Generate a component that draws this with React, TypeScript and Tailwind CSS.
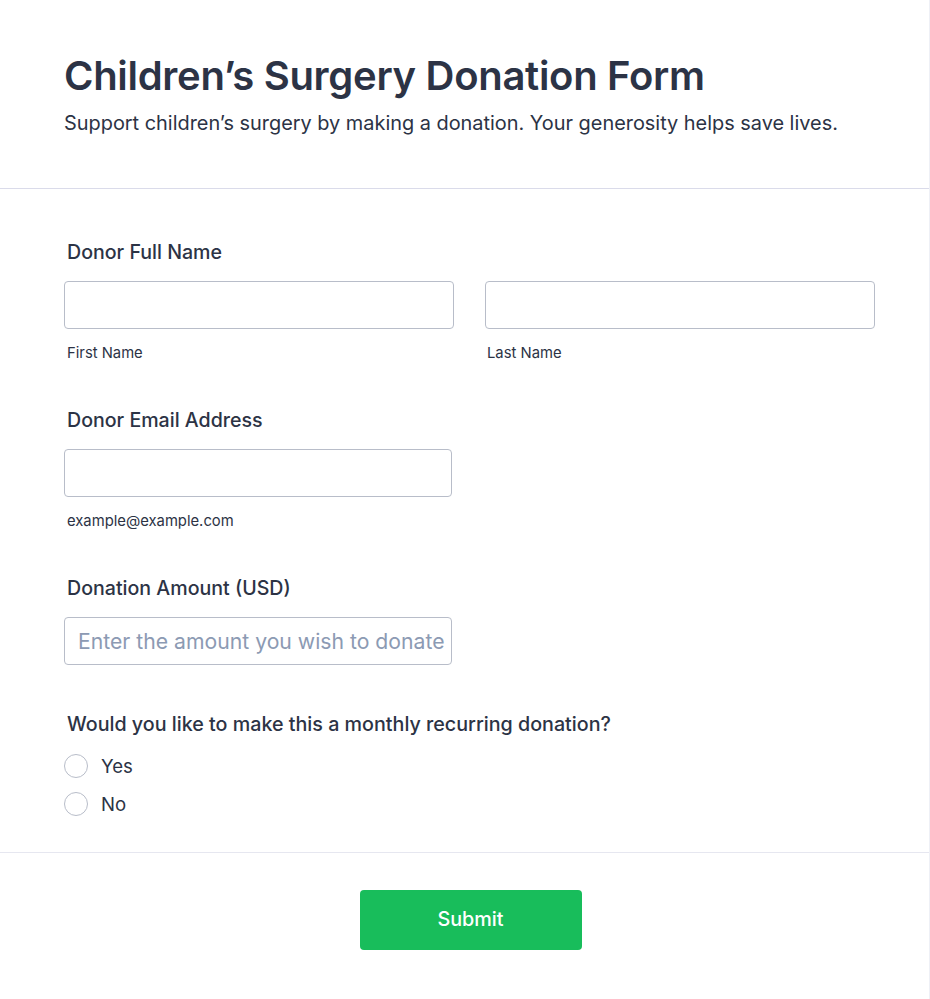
export default function App() {
  return (
    <div className="min-h-[999px] w-[930px] border-r border-[#eef0f6] bg-white font-['Inter',sans-serif] text-[#2c3345]">
      <div className="px-16 pt-[52px] pb-[51px] border-b border-[#dadbea]">
        <h1 className="text-[40px] font-semibold leading-[48px] tracking-[-0.3px]">Children’s Surgery Donation Form</h1>
        <p className="mt-[9px] text-[19.9px] leading-[28px]">
          Support children’s surgery by making a donation. Your generosity helps save lives.
        </p>
      </div>

      <div className="pl-16 pr-[40px] pt-[50px] pb-[36px] border-b border-[#e6e7f0]">
        <div>
          <label className="block pl-[3px] text-[19.6px] font-medium leading-[26px]">Donor Full Name</label>
          <div className="mt-[16px] flex gap-[31px]">
            <div className="w-[390px] shrink-0">
              <input className="block h-[48px] w-full rounded-[4px] border border-[#b8bdc9] px-3" />
              <span className="mt-[14px] block pl-[3px] text-[14.8px] leading-[20px]">First Name</span>
            </div>
            <div className="w-[390px] shrink-0">
              <input className="block h-[48px] w-full rounded-[4px] border border-[#b8bdc9] px-3" />
              <span className="mt-[14px] block pl-[2px] text-[14.8px] leading-[20px]">Last Name</span>
            </div>
          </div>
        </div>

        <div className="mt-[44px]">
          <label className="block pl-[3px] text-[19.6px] font-medium leading-[26px]">Donor Email Address</label>
          <div className="mt-[16px] w-[388px]">
            <input className="block h-[48px] w-full rounded-[4px] border border-[#b8bdc9] px-3" />
            <span className="mt-[14px] block pl-[3px] text-[14.8px] leading-[20px]">example@example.com</span>
          </div>
        </div>

        <div className="mt-[44px]">
          <label className="block pl-[3px] text-[19.6px] font-medium leading-[26px]">Donation Amount (USD)</label>
          <input
            className="mt-[16px] block h-[48px] w-[388px] rounded-[4px] border border-[#b8bdc9] pl-[13px] pr-[1px] text-[21.2px] placeholder:text-[#8c9ab3]"
            placeholder="Enter the amount you wish to donate"
          />
        </div>

        <div className="mt-[46px]">
          <label className="block pl-[3px] text-[19.7px] font-medium leading-[26px]">
            Would you like to make this a monthly recurring donation?
          </label>
          <div className="mt-[17px] flex flex-col gap-[14px]">
            {['Yes', 'No'].map((opt) => (
              <label key={opt} className="flex items-center gap-[13px]">
                <span className="h-[24px] w-[24px] rounded-full border border-[#b8bdc9] bg-white" />
                <span className="text-[18.6px] leading-[24px]">{opt}</span>
              </label>
            ))}
          </div>
        </div>
      </div>

      <div className="flex justify-center pl-[12px] pt-[37px]">
        <button className="h-[60px] w-[222px] rounded-[4px] bg-[#18bd5b] text-[19.8px] font-medium text-white">
          Submit
        </button>
      </div>
    </div>
  );
}
